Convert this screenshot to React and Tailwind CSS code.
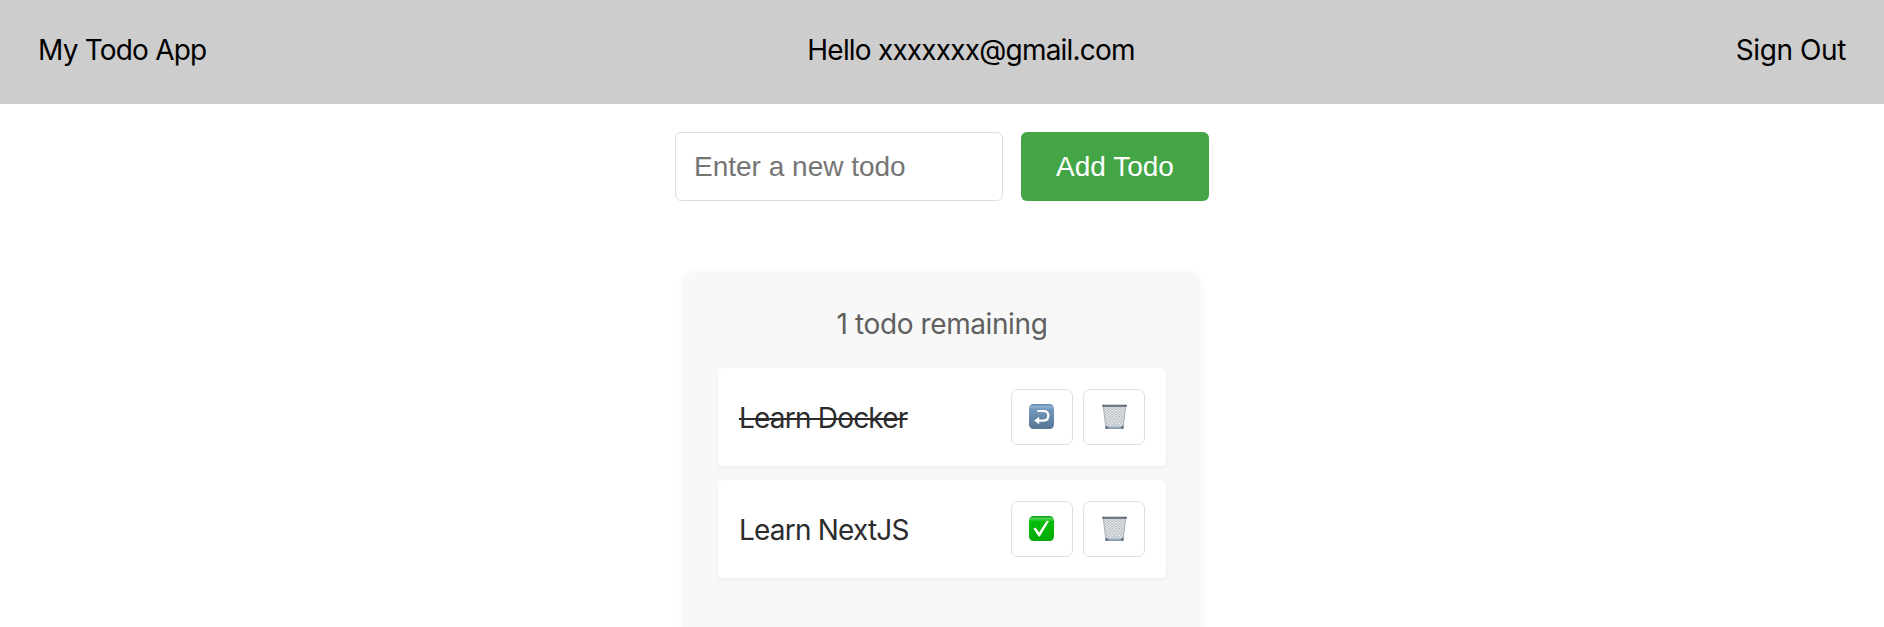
const sans = "font-[Inter,'Liberation_Sans',sans-serif]";

function UndoIcon() {
  return (
    <svg className="mr-0.5" width="25" height="25" viewBox="0 0 25 25">
      <defs>
        <linearGradient id="blue" x1="0" y1="0" x2="0" y2="1">
          <stop offset="0" stopColor="#5d83ab" />
          <stop offset="0.1" stopColor="#8badd0" />
          <stop offset="0.22" stopColor="#7398bd" />
          <stop offset="1" stopColor="#557492" />
        </linearGradient>
      </defs>
      <rect width="25" height="25" rx="4.500" fill="url(#blue)" />
      <path d="M8.500 7h6c3 0 4.800 1.900 4.800 4.800s-1.800 4.800-4.800 4.800H9" fill="none" stroke="#fff" strokeWidth="2.200" />
      <path d="M5 16.600l5.200-3.700v7.300z" fill="#fff" />
    </svg>
  );
}

function CheckIcon() {
  return (
    <svg className="mr-0.5" width="25" height="25" viewBox="0 0 25 25">
      <defs>
        <linearGradient id="green" x1="0" y1="0" x2="0" y2="1">
          <stop offset="0" stopColor="#008f05" />
          <stop offset="0.1" stopColor="#4bd552" />
          <stop offset="0.22" stopColor="#06bd0a" />
          <stop offset="1" stopColor="#00aa04" />
        </linearGradient>
      </defs>
      <rect width="25" height="25" rx="4.500" fill="url(#green)" />
      <path d="M4.500 12.800l2.100-1.300 3.500 5.100 7.600-11.800 2.300.100-9.200 15.700h-1.300z" fill="#fff" />
    </svg>
  );
}

function TrashIcon() {
  return (
    <svg width="25" height="25" viewBox="0 0 25 25">
      <defs>
        <pattern id="mesh" width="3.400" height="2.600" patternUnits="userSpaceOnUse">
          <path d="M0 0l3.400 2.600M3.400 0l-3.400 2.600" stroke="#9a9fa3" strokeWidth="0.600" />
        </pattern>
      </defs>
      <path d="M1.200 2h22.600L21.300 24H3.700z" fill="#f4f6f7" />
      <path d="M1.200 2h22.600L21.300 24H3.700z" fill="url(#mesh)" />
      <path d="M1.300 3l2.500 20M23.700 3l-2.500 20" stroke="#a3abb5" strokeWidth="0.900" />
      <path d="M0 0.700h25l-.3 2H.3z" fill="#5a616d" />
      <path d="M3.500 1.600h18" stroke="#7d8793" strokeWidth="0.600" />
      <path d="M3.500 22.200h18l-.5 2.600H4z" fill="#b0c2d6" />
      <path d="M3.600 24.100h17.800" stroke="#6c7a8d" strokeWidth="1" />
      <path d="M3.400 22.300h2.200v2.300H3.700zM19.400 22.300h2.200l-.3 2.300h-1.900z" fill="#4c5868" />
    </svg>
  );
}

function IconButton({ label, children }) {
  return (
    <button aria-label={label} className="flex h-14 w-[62px] items-center justify-center rounded-[7px] border border-[#ddd] bg-white pb-0.5">
      {children}
    </button>
  );
}

function Todo({ title, done }) {
  return (
    <li className="flex h-[98px] items-center justify-between rounded-md bg-white px-[21px] shadow-[0_2px_4px_rgba(0,0,0,0.05)]">
      <span className={done ? "pt-0.5 line-through decoration-2" : "pt-0.5"}>{title}</span>
      <div className="flex gap-2.5">
        <IconButton label={done ? "Undo" : "Complete"}>{done ? <UndoIcon /> : <CheckIcon />}</IconButton>
        <IconButton label="Delete"><TrashIcon /></IconButton>
      </div>
    </li>
  );
}

export default function App() {
  return (
    <div className={`h-[627px] overflow-hidden bg-white text-[28px] leading-[34px] tracking-[-0.8px] text-black ${sans}`}>
      <header className="flex h-[104px] items-center justify-between bg-[#cdcdcd] px-[38px] pb-1">
        <span>My Todo App</span>
        <span>Hello xxxxxxx@gmail.com</span>
        <span className="tracking-[-0.4px]">Sign Out</span>
      </header>
      <main className="flex flex-col items-center pt-7">
        <form className="flex gap-[18px] font-['Liberation_Sans',Arial,sans-serif] tracking-normal">
          <input placeholder="Enter a new todo" className="h-[69px] w-[328px] rounded-md border border-[#ddd] px-[18px] placeholder:text-[#757575]" />
          <button type="button" className="h-[69px] w-[188px] rounded-md bg-[#43a546] text-white">Add Todo</button>
        </form>
        <section className="mt-[70px] h-[420px] w-[518px] rounded-[14px] bg-[#f8f8f8] px-[35px] pt-9 shadow-[0_2px_8px_rgba(0,0,0,0.04)]">
          <p className="text-center tracking-[-0.4px] text-[#5f5f5f]">1 todo remaining</p>
          <ul className="mt-[27px] flex flex-col gap-3.5 text-[#2c2c2c]">
            <Todo title="Learn Docker" done />
            <Todo title="Learn NextJS" />
          </ul>
        </section>
      </main>
    </div>
  );
}
